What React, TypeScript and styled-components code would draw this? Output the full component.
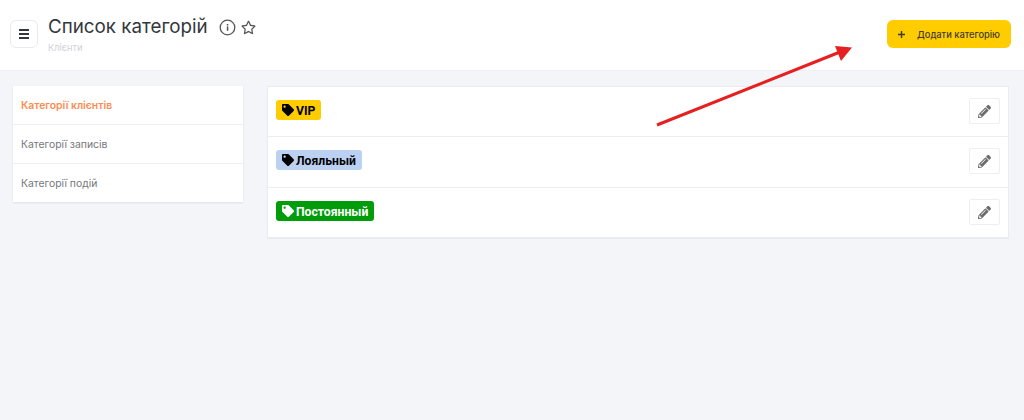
import React from "react";
import styled, { createGlobalStyle } from "styled-components";
import { FaTag, FaPencilAlt, FaRegStar } from "react-icons/fa";

const Global = createGlobalStyle`
  html, body { margin: 0; padding: 0; background: #f3f5f9; }
  body { font-family: Inter, "Noto Sans", sans-serif; width: 1024px; height: 420px; overflow: hidden; position: relative; }
`;

const Header = styled.header`
  height: 71px;
  box-sizing: border-box;
  background: #fff;
  border-bottom: 1px solid #eceef3;
  display: flex;
  justify-content: space-between;
  padding: 20px 13px 0 10px;
`;
const HeaderLeft = styled.div`
  display: flex;
  align-items: flex-start;
  gap: 10px;
`;
const MenuButton = styled.div`
  width: 28px;
  height: 28px;
  box-sizing: border-box;
  border: 1.5px solid #e8eaf1;
  border-radius: 6px;
  background: #fff;
  display: flex;
  flex-direction: column;
  align-items: center;
  justify-content: center;
  gap: 2px;
`;
const MenuLine = styled.span`
  width: 10px;
  height: 2px;
  background: #33363c;
`;
const TitleBlock = styled.div`
  display: flex;
  flex-direction: column;
  margin-top: -3px;
`;
const TitleRow = styled.div`
  display: flex;
  align-items: center;
  height: 22px;
  margin-top: -1px;
`;
const Title = styled.h1`
  margin: 0;
  font-size: 18.8px;
  font-weight: 400;
  color: #33373d;
  line-height: 22px;
  white-space: nowrap;
`;
const InfoIcon = styled.svg`
  width: 17px;
  height: 17px;
  margin-left: 11px;
  color: #555;
`;
const StarIcon = styled(FaRegStar)`
  width: 15px;
  height: 15px;
  margin-left: 5px;
  color: #555;
`;
const Crumb = styled.div`
  font-size: 9.3px;
  line-height: 11px;
  color: #d0d2d9;
  margin-top: 4px;
`;
const AddButton = styled.button`
  width: 124px;
  height: 28px;
  border: 0;
  border-radius: 6px;
  background: #ffcc00;
  color: #3f3c2c;
  font: 500 9.3px Inter, sans-serif;
  display: flex;
  align-items: center;
  padding: 0 0 0 10px;
  white-space: nowrap;
`;
const Plus = styled.svg`
  width: 9px;
  height: 9px;
  margin-right: 11px;
  color: #3c3a2c;
`;
const Main = styled.main`
  display: flex;
  align-items: flex-start;
  gap: 24px;
  padding: 15px 15px 0 13px;
`;
const Sidebar = styled.nav`
  width: 230px;
  flex: none;
  background: #fff;
  box-shadow: 0 1px 2px rgba(30, 40, 70, 0.1);
`;
const SideItem = styled.div<{ $active?: boolean }>`
  height: 39px;
  box-sizing: border-box;
  padding-left: 8px;
  display: flex;
  align-items: center;
  font-size: 10.4px;
  font-weight: ${(p) => (p.$active ? 600 : 400)};
  color: ${(p) => (p.$active ? "#fc8b52" : "#75767a")};
  &:first-child { height: 38px; }
  & + & { border-top: 1px solid #eef0f3; }
`;
const List = styled.section`
  flex: 1;
  background: #fff;
  border: 1px solid #e9ebf0;
  border-bottom-width: 2px;
  box-sizing: border-box;
`;
const Row = styled.div`
  height: 51px;
  box-sizing: border-box;
  padding: 11px 8px 0 8px;
  display: flex;
  justify-content: space-between;
  align-items: flex-start;
  &:first-child { height: 49px; }
  &:last-child { height: 50px; }
  & + & { border-top: 1px solid #eceef2; }
`;
const Badge = styled.span<{ $bg: string; $fg: string }>`
  height: 20px;
  margin-top: 2px;
  box-sizing: border-box;
  padding: 1px 6px 0;
  border-radius: 3px;
  background: ${(p) => p.$bg};
  color: ${(p) => p.$fg};
  display: inline-flex;
  align-items: center;
  gap: 2px;
  font: 700 12.2px Roboto, "Noto Sans", sans-serif;
  white-space: nowrap;
`;
const TagIcon = styled(FaTag)`
  width: 12px;
  height: 12px;
  margin-top: -2px;
`;
const EditButton = styled.div`
  width: 31px;
  height: 26px;
  box-sizing: border-box;
  border: 1px solid #eeeff2;
  border-radius: 2px;
  background: #fff;
  display: flex;
  align-items: center;
  justify-content: center;
  color: #6b6b6b;
`;
const Pencil = styled(FaPencilAlt)`
  width: 13px;
  height: 13px;
`;
const ArrowOverlay = styled.svg`
  position: absolute;
  left: 0;
  top: 0;
  width: 1024px;
  height: 420px;
  pointer-events: none;
`;

const rows = [
  { name: "VIP", bg: "#ffcc00", fg: "#000" },
  { name: "Лояльный", bg: "#bcd1f2", fg: "#000" },
  { name: "Постоянный", bg: "#009c0a", fg: "#fff" },
];

export default function App() {
  return (
    <>
      <Global />
      <Header>
        <HeaderLeft>
          <MenuButton>
            <MenuLine />
            <MenuLine />
            <MenuLine />
          </MenuButton>
          <TitleBlock>
            <TitleRow>
              <Title>Список категорій</Title>
              <InfoIcon viewBox="0 0 17 17" fill="none">
                <circle cx="8.5" cy="8.5" r="7.3" stroke="currentColor" strokeWidth="1.3" />
                <rect x="7.8" y="7.4" width="1.5" height="4.4" fill="currentColor" />
                <rect x="7.8" y="5" width="1.5" height="1.5" fill="currentColor" />
              </InfoIcon>
              <StarIcon />
            </TitleRow>
            <Crumb>Клієнти</Crumb>
          </TitleBlock>
        </HeaderLeft>
        <AddButton>
          <Plus viewBox="0 0 9 9">
            <path d="M4.5 1v7M1 4.5h7" stroke="currentColor" strokeWidth="1.4" fill="none" />
          </Plus>
          Додати категорію
        </AddButton>
      </Header>
      <Main>
        <Sidebar>
          <SideItem $active>Категорії клієнтів</SideItem>
          <SideItem>Категорії записів</SideItem>
          <SideItem>Категорії подій</SideItem>
        </Sidebar>
        <List>
          {rows.map((r) => (
            <Row key={r.name}>
              <Badge $bg={r.bg} $fg={r.fg}>
                <TagIcon />
                {r.name}
              </Badge>
              <EditButton>
                <Pencil />
              </EditButton>
            </Row>
          ))}
        </List>
      </Main>
      <ArrowOverlay viewBox="0 0 1024 420">
        <path d="M657 125L840 52" stroke="#e62020" strokeWidth="3" fill="none" />
        <path d="M835 46L852 47.500L841 61Z" fill="#e62020" />
      </ArrowOverlay>
    </>
  );
}
